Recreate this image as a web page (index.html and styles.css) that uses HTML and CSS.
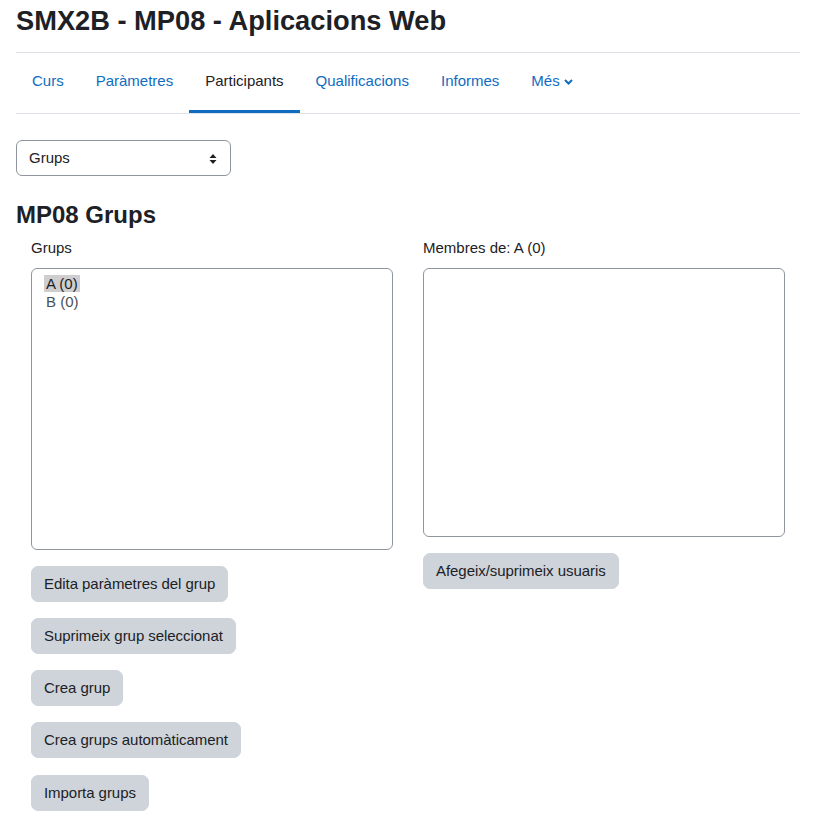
FILE: index.html
```html
<!DOCTYPE html>
<html lang="ca">
<head>
<meta charset="utf-8">
<title>SMX2B - MP08 - Aplicacions Web</title>
<link rel="stylesheet" href="styles.css">
</head>
<body>
<div class="page">
  <h1 class="page-title">SMX2B - MP08 - Aplicacions Web</h1>
  <nav class="secnav">
    <ul>
      <li><a href="#">Curs</a></li>
      <li><a href="#">Paràmetres</a></li>
      <li><a href="#" class="active">Participants</a></li>
      <li><a href="#">Qualificacions</a></li>
      <li><a href="#">Informes</a></li>
      <li><a href="#" class="more">Més <svg class="chev" width="9" height="6" viewBox="0 0 9 6"><path d="M1 1 L4.5 4.5 L8 1" fill="none" stroke="#0f6cbf" stroke-width="2"/></svg></a></li>
    </ul>
  </nav>

  <div class="selector">
    <span>Grups</span>
    <svg class="updown" width="8" height="12" viewBox="0 0 8 12"><path d="M4 1 L7.5 5 H0.5 Z M4 11 L7.5 7 H0.5 Z" fill="#1d2125"/></svg>
  </div>

  <h2 class="section-title">MP08 Grups</h2>

  <div class="cols">
    <div class="col">
      <div class="label">Grups</div>
      <div class="listbox tall">
        <div class="opt selected">A (0)</div>
        <div class="opt">B (0)</div>
      </div>
      <div class="buttons">
        <button class="btn">Edita paràmetres del grup</button>
        <button class="btn">Suprimeix grup seleccionat</button>
        <button class="btn">Crea grup</button>
        <button class="btn">Crea grups automàticament</button>
        <button class="btn">Importa grups</button>
      </div>
    </div>
    <div class="col">
      <div class="label">Membres de: A (0)</div>
      <div class="listbox short"></div>
      <div class="buttons">
        <button class="btn">Afegeix/suprimeix usuaris</button>
      </div>
    </div>
  </div>
</div>
</body>
</html>
```

FILE: styles.css
```css
* { box-sizing: border-box; }
html, body { margin: 0; padding: 0; background: #fff; }
body {
  font-family: "Liberation Sans", Arial, sans-serif;
  font-size: 15px;
  line-height: 1.5;
  color: #1d2125;
}
.page { padding: 5px 16px 0 16px; width: 816px; }
.page-title {
  margin: 0;
  font-size: 27.25px;
  line-height: 32px;
  font-weight: 700;
  color: #1d2125;
  padding-bottom: 15px;
}
.secnav { border-top: 1px solid #dee2e6; border-bottom: 1px solid #dee2e6; }
.secnav ul { list-style: none; margin: 0; padding: 0; display: flex; }
.secnav a {
  display: flex;
  align-items: center;
  gap: 4px;
  padding: 17px 16px 17.5px 16px;
  line-height: 22.5px;
  border-bottom: 3px solid transparent;
  color: #0f6cbf;
  text-decoration: none;
}
.secnav a.active { color: #1d2125; border-bottom-color: #0f6cbf; }
.chev { margin-top: 2px; }
.selector {
  margin-top: 26px;
  width: 215px;
  height: 36px;
  border: 1px solid #8f959e;
  border-radius: 6px;
  display: flex;
  align-items: center;
  justify-content: space-between;
  padding: 1px 13px 0 12px;
  color: #1d2125;
}
.section-title {
  margin: 25px 0 0 0;
  font-size: 24px;
  line-height: 28px;
  font-weight: 700;
}
.cols { display: grid; grid-template-columns: 1fr 1fr; margin-top: 8px; }
.col { padding: 0 15px; }
.label { line-height: 22.5px; margin-bottom: 8px; }
.listbox {
  border: 1px solid #8f959e;
  border-radius: 6px;
  padding: 6px 12px;
}
.listbox.tall { height: 282px; }
.listbox.short { height: 269px; }
.opt {
  display: table;
  line-height: 17px;
  height: 18px;
  padding: 0 2px;
  color: #495057;
}
.opt.selected { background: #cecece; color: #1d2125; height: 17px; margin-bottom: 1px; }
.buttons {
  display: flex;
  flex-direction: column;
  align-items: flex-start;
  gap: 16.3px;
  margin-top: 16px;
}
.btn {
  font-family: inherit;
  font-size: 15px;
  line-height: 22px;
  letter-spacing: -0.05px;
  color: #1d2125;
  background: #ced4da;
  border: 1px solid #ced4da;
  border-radius: 7px;
  padding: 6px 12px;
  height: 36px;
}
```
